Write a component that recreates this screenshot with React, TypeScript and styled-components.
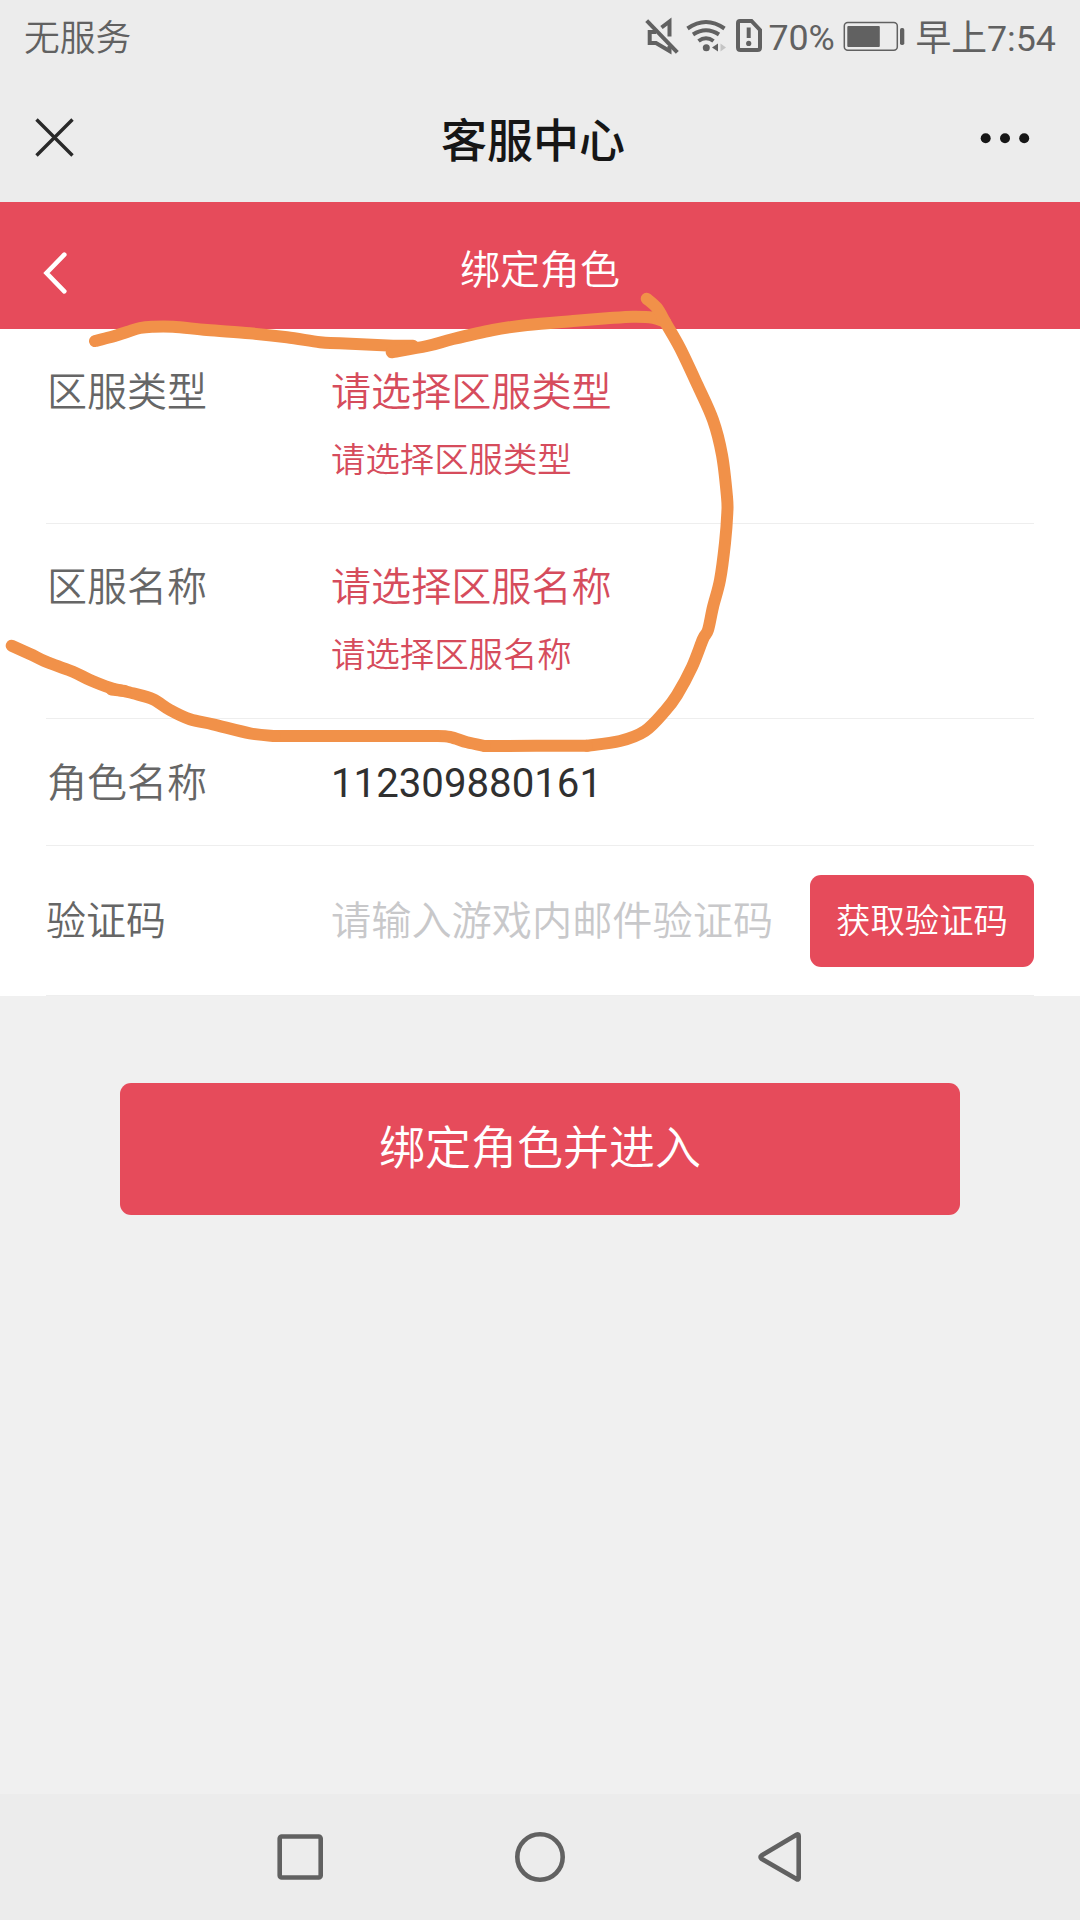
import React from "react";
import styled, { createGlobalStyle } from "styled-components";

const GlobalStyle = createGlobalStyle`
  html, body { margin: 0; padding: 0; }
  body {
    background: #f0f0f0;
    font-family: Roboto, "Noto Sans CJK SC", sans-serif;
  }
  button, input { font-family: inherit; border: 0; margin: 0; }
`;

const Screen = styled.div`
  position: relative;
  display: flex;
  flex-direction: column;
  width: 1080px;
  height: 1920px;
  overflow: hidden;
  background: #f0f0f0;
`;

const StatusBar = styled.div`
  display: flex;
  align-items: center;
  justify-content: space-between;
  box-sizing: border-box;
  height: 76px;
  padding: 0 24px 0 24px;
  background: #ececec;
  color: #616161;
  font-size: 35.8px;
  white-space: nowrap;
`;

const StatusGroup = styled.div`
  display: flex;
  align-items: center;
`;

const StatusIcon = styled.svg<{ $w: number; $gap: number }>`
  display: block;
  width: ${(p) => p.$w}px;
  height: 76px;
  margin-right: ${(p) => p.$gap}px;
`;

const StatusText = styled.span<{ $w?: number; $light?: boolean }>`
  display: block;
  width: ${(p) => (p.$w ? `${p.$w}px` : "auto")};
  padding-top: ${(p) => (p.$w ? 0 : 2)}px;
  line-height: 74px;
  font-weight: ${(p) => (p.$light ? 350 : 400)};
`;

const TitleBar = styled.header`
  display: grid;
  grid-template-columns: 200px 1fr 214px;
  align-items: center;
  height: 126px;
  background: #ececec;
`;

const Title = styled.h1`
  margin: 0;
  padding-top: 5px;
  text-align: center;
  color: #161616;
  font-size: 46px;
  font-weight: 500;
  line-height: 121px;
`;

const IconButton = styled.button<{ $left?: number; $right?: number; $lift?: number }>`
  display: block;
  justify-self: ${(p) => (p.$right ? "end" : "start")};
  margin-left: ${(p) => p.$left ?? 0}px;
  margin-right: ${(p) => p.$right ?? 0}px;
  margin-bottom: ${(p) => p.$lift ?? 0}px;
  padding: 0;
  background: none;
  svg { display: block; }
`;

const PageBar = styled.div`
  display: grid;
  grid-template-columns: 200px 1fr 200px;
  align-items: center;
  height: 127px;
  background: #e64b5b;
`;

const PageTitle = styled.h2`
  margin: 0;
  padding-top: 10px;
  color: #fff;
  text-align: center;
  font-size: 40px;
  font-weight: 350;
  line-height: 100px;
`;

const Form = styled.form`
  padding: 0 46px;
  background: #fff;
`;

const Row = styled.div<{ $h: number; $top?: number }>`
  display: flex;
  align-items: ${(p) => (p.$top ? "flex-start" : "center")};
  box-sizing: border-box;
  height: ${(p) => p.$h}px;
  padding-top: ${(p) => p.$top ?? 0}px;
  border-bottom: 1px solid #eeeeee;
`;

const Label = styled.label`
  flex: 0 0 284px;
  padding-left: 1px;
  color: #666;
  font-size: 40px;
  font-weight: 350;
  line-height: 56px;
`;

const Field = styled.div`
  display: flex;
  flex-direction: column;
  gap: 18px;
`;

const Choice = styled.span`
  color: #d64c5c;
  font-size: 40.1px;
  font-weight: 350;
  line-height: 56px;
`;

const ErrorText = styled.span`
  color: #d64c5c;
  font-size: 34.4px;
  font-weight: 350;
  line-height: 42px;
`;

const Value = styled.span`
  color: #303030;
  font-size: 40.2px;
  line-height: 56px;
`;

const Placeholder = styled.span`
  flex: 1;
  color: #c8c8ca;
  font-size: 40.2px;
  font-weight: 350;
  line-height: 56px;
  white-space: nowrap;
`;

const CodeRow = styled(Row)`
  ${Label}, ${Placeholder} {
    padding-top: 2px;
  }
  ${Label} {
    padding-left: 0;
    flex-basis: 285px;
  }
`;

const CodeButton = styled.button`
  width: 224px;
  height: 92px;
  padding: 0 0 6px;
  border-radius: 11px;
  background: #e64b5b;
  color: #fff;
  font-size: 34.4px;
  font-weight: 350;
  white-space: nowrap;
`;

const SubmitButton = styled.button`
  align-self: center;
  width: 840px;
  height: 132px;
  margin-top: 87px;
  padding: 0 0 11px;
  border-radius: 11px;
  background: #e64b5b;
  color: #fff;
  font-size: 46px;
  font-weight: 350;
`;

const NavBar = styled.nav`
  display: flex;
  justify-content: center;
  gap: 184px;
  align-items: center;
  height: 126px;
  margin-top: auto;
  background: #ececec;
`;

const NavIcon = styled.svg`
  display: block;
  width: 56px;
  height: 56px;
  fill: none;
  stroke: #616161;
  stroke-width: 4.6;
  stroke-linejoin: round;
`;

const Marker = styled.svg`
  position: absolute;
  left: 0;
  top: 0;
  pointer-events: none;
  fill: none;
  stroke: #f19149;
  stroke-width: 12;
  stroke-linecap: round;
  stroke-linejoin: round;
`;

const MuteIcon = () => (
  <StatusIcon $w={34} $gap={6} viewBox="645 0 34 76" fill="none" stroke="#616161" strokeWidth="4">
    <path d="M646.7 20.7L677.3 52.3" />
    <path d="M661.5 27.5L669.5 21.500V36.5" />
    <path d="M656 32H649.7V43H656L669.5 51V46" />
  </StatusIcon>
);

const WifiIcon = () => (
  <StatusIcon $w={42} $gap={8} viewBox="685 0 42 76" fill="none" stroke="#616161" strokeWidth="4">
    <path d="M687.5 28.5Q706 15.500 724.500 28.500" />
    <path d="M693 34.500Q706 26 719 34.500" />
    <path d="M698.500 41Q706 35.500 713.500 41" />
    <circle cx="706.3" cy="47.800" r="3.500" fill="#616161" stroke="none" />
    <path d="M718 43.500V51.500L712 47.500Z" fill="#616161" stroke="none" />
    <path d="M720.500 43.500V51.500L726 47.500Z" fill="#c4c4c4" stroke="none" />
  </StatusIcon>
);

const SimIcon = () => (
  <StatusIcon $w={27} $gap={6} viewBox="735 0 27 76" fill="none" stroke="#616161" strokeWidth="4">
    <path d="M740 21H751.500L760 30V47.500Q760 50 757.500 50H740.500Q738 50 738 47.500V23Q738 21 740 21Z" />
    <path d="M748.700 27.500V38" />
    <circle cx="748.700" cy="43.400" r="2.600" fill="#616161" stroke="none" />
  </StatusIcon>
);

const BatteryIcon = () => (
  <StatusIcon $w={64} $gap={9} viewBox="842 0 64 76" fill="none" stroke="#616161">
    <rect x="844.300" y="22.600" width="53" height="27.600" rx="3.500" strokeWidth="1.500" />
    <rect x="847.300" y="26" width="32.500" height="21" rx="1" fill="#616161" stroke="none" />
    <rect x="900" y="28" width="4.300" height="17" rx="1.800" fill="#616161" stroke="none" />
  </StatusIcon>
);

type Point = [number, number];

const strokes: Point[][] = [
  [[95, 341], [110, 337.3], [127, 332], [140, 328], [152, 326.7], [173, 326.7], [207, 330], [250, 333.3], [287, 337.3], [320, 342.3], [340, 343.3], [393, 345.7], [413, 345.7]],
  [[391.7, 352.3], [427, 346], [453, 339], [493, 330], [527, 325], [573, 321], [607, 318.3], [633, 316.7], [653, 317.7], [665, 321.7]],
  [[646.7, 298.7], [657, 308], [665.7, 323], [680, 348], [697, 384], [713, 420], [722, 455], [727, 497], [727.3, 513], [725, 543], [720, 580], [713, 607], [708, 630], [703, 639], [692, 667], [677, 695], [665, 711], [645, 731], [620, 741], [587, 745.7]],
  [[587, 745.7], [485, 746]],
  [[485, 746], [467, 742.3], [450, 737], [435, 736]],
  [[435, 736], [275, 736]],
  [[275, 736], [250, 733.3], [213, 724.3], [190, 719.3], [170, 710], [153, 699.3], [133, 693.3], [110, 687.7], [90, 680], [73, 671.7], [50, 663.3], [30, 654], [11.7, 645.7]],
  [[111.5, 689.5], [125, 691]],
];

// Catmull-Rom spline through the points, written as cubic segments.
function spline(pts: Point[]): string {
  let d = `M${pts[0][0]} ${pts[0][1]}`;
  for (let i = 0; i < pts.length - 1; i++) {
    const a = pts[i - 1] ?? pts[i];
    const b = pts[i];
    const c = pts[i + 1];
    const e = pts[i + 2] ?? c;
    d += `C${b[0] + (c[0] - a[0]) / 6} ${b[1] + (c[1] - a[1]) / 6} ${c[0] - (e[0] - b[0]) / 6} ${c[1] - (e[1] - b[1]) / 6} ${c[0]} ${c[1]}`;
  }
  return d;
}

const choices = [
  { label: "区服类型", hint: "请选择区服类型" },
  { label: "区服名称", hint: "请选择区服名称" },
];

export default function App() {
  return (
    <Screen>
      <GlobalStyle />
      <StatusBar>
        <StatusText $light>无服务</StatusText>
        <StatusGroup>
          <MuteIcon />
          <WifiIcon />
          <SimIcon />
          <StatusText $w={74}>70%</StatusText>
          <BatteryIcon />
          <StatusText>早上7:54</StatusText>
        </StatusGroup>
      </StatusBar>

      <TitleBar>
        <IconButton $left={34} $lift={4} aria-label="关闭">
          <svg width="41" height="41" viewBox="0 0 41 41" stroke="#292929" strokeWidth="3.4">
            <path d="M2.500 2.500L38.500 38.500M38.500 2.500L2.500 38.500" />
          </svg>
        </IconButton>
        <Title>客服中心</Title>
        <IconButton $right={50} $lift={1} aria-label="更多">
          <svg width="50" height="12" viewBox="0 0 50 12" fill="#161616">
            <circle cx="5.700" cy="5.300" r="5" />
            <circle cx="25" cy="5.300" r="5" />
            <circle cx="44.200" cy="5.300" r="5" />
          </svg>
        </IconButton>
      </TitleBar>

      <PageBar>
        <IconButton $left={41} $lift={-14} aria-label="返回">
          <svg width="30" height="44" viewBox="42 250.600 30 44" fill="none" stroke="#fff" strokeWidth="4.600" strokeLinecap="round">
            <path d="M65.300 254.300L47.500 272.600L65.300 290.900" />
          </svg>
        </IconButton>
        <PageTitle>绑定角色</PageTitle>
      </PageBar>

      <Form>
        {choices.map((c) => (
          <Row key={c.label} $h={195} $top={36}>
            <Label>{c.label}</Label>
            <Field>
              <Choice>{c.hint}</Choice>
              <ErrorText>{c.hint}</ErrorText>
            </Field>
          </Row>
        ))}
        <Row $h={127} $top={37}>
          <Label>角色名称</Label>
          <Value>112309880161</Value>
        </Row>
        <CodeRow $h={150}>
          <Label>验证码</Label>
          <Placeholder>请输入游戏内邮件验证码</Placeholder>
          <CodeButton type="button">获取验证码</CodeButton>
        </CodeRow>
      </Form>

      <SubmitButton type="button">绑定角色并进入</SubmitButton>

      <NavBar>
        <NavIcon viewBox="272 1829 56 56">
          <rect x="279.700" y="1836.500" width="41" height="41" rx="2" />
        </NavIcon>
        <NavIcon viewBox="512 1829 56 56">
          <circle cx="540" cy="1857" r="22.700" />
        </NavIcon>
        <NavIcon viewBox="752 1829 56 56">
          <path d="M796.500 1834.800Q798.700 1833.500 798.700 1836V1878Q798.700 1880.500 796.500 1879L761.500 1858.800Q759.500 1857 761.500 1855.500Z" />
        </NavIcon>
      </NavBar>

      <Marker width="1080" height="800" viewBox="0 0 1080 800">
        {strokes.map((pts, i) => (
          <path key={i} d={spline(pts)} />
        ))}
      </Marker>
    </Screen>
  );
}
